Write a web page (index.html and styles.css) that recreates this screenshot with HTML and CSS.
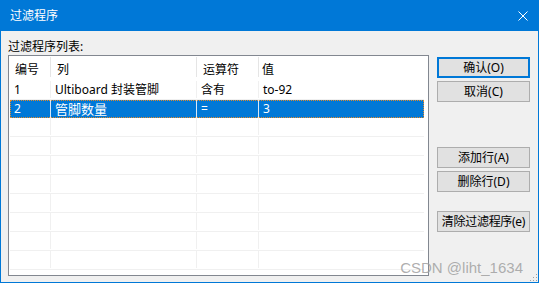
FILE: index.html
```html
<!DOCTYPE html>
<html>
<head>
  <title>过滤程序</title>
  <link rel="stylesheet" href="styles.css">
</head>
<body>
  <div class="window">
    <div class="titlebar">
      <span class="title">过滤程序</span>
      <svg class="close" width="10" height="10" viewBox="0 0 10 10">
        <path d="M0.5 0.5 L9.5 9.5 M9.5 0.5 L0.5 9.5" stroke="#fff" stroke-width="1" fill="none"/>
      </svg>
    </div>

    <div class="content">
      <div class="left">
        <div class="label">过滤程序列表:</div>
        <div class="list">
          <div class="row header">
            <div class="cell c1">编号</div>
            <div class="cell c2">列</div>
            <div class="cell c3">运算符</div>
            <div class="cell c4">值</div>
          </div>
          <div class="row">
            <div class="cell c1">1</div>
            <div class="cell c2">Ultiboard 封装管脚</div>
            <div class="cell c3">含有</div>
            <div class="cell c4">to-92</div>
          </div>
          <div class="row selected">
            <div class="cell c1">2</div>
            <div class="cell c2">管脚数量</div>
            <div class="cell c3">=</div>
            <div class="cell c4">3</div>
          </div>
          <div class="row"><div class="cell c1"></div><div class="cell c2"></div><div class="cell c3"></div><div class="cell c4"></div></div>
          <div class="row"><div class="cell c1"></div><div class="cell c2"></div><div class="cell c3"></div><div class="cell c4"></div></div>
          <div class="row"><div class="cell c1"></div><div class="cell c2"></div><div class="cell c3"></div><div class="cell c4"></div></div>
          <div class="row"><div class="cell c1"></div><div class="cell c2"></div><div class="cell c3"></div><div class="cell c4"></div></div>
          <div class="row"><div class="cell c1"></div><div class="cell c2"></div><div class="cell c3"></div><div class="cell c4"></div></div>
          <div class="row"><div class="cell c1"></div><div class="cell c2"></div><div class="cell c3"></div><div class="cell c4"></div></div>
          <div class="row"><div class="cell c1"></div><div class="cell c2"></div><div class="cell c3"></div><div class="cell c4"></div></div>
          <div class="row"><div class="cell c1"></div><div class="cell c2"></div><div class="cell c3"></div><div class="cell c4"></div></div>
        </div>
      </div>

      <div class="buttons">
        <button class="btn default">确认(O)</button>
        <button class="btn">取消(C)</button>
        <button class="btn add">添加行(A)</button>
        <button class="btn">删除行(D)</button>
        <button class="btn clear">清除过滤程序(e)</button>
      </div>
    </div>

    <div class="watermark">CSDN @liht_1634</div>
    <svg class="grip" width="10" height="10" viewBox="0 0 10 10">
      <rect x="8" y="2" width="1" height="1" fill="#a0a0a0"/>
      <rect x="5" y="5" width="1" height="1" fill="#a0a0a0"/>
      <rect x="8" y="5" width="1" height="1" fill="#a0a0a0"/>
      <rect x="2" y="8" width="1" height="1" fill="#a0a0a0"/>
      <rect x="5" y="8" width="1" height="1" fill="#a0a0a0"/>
      <rect x="8" y="8" width="1" height="1" fill="#a0a0a0"/>
    </svg>
  </div>
</body>
</html>
```

FILE: styles.css
```css
body {
  margin: 0;
  font-family: "Noto Sans", "Noto Sans CJK SC", sans-serif;
  font-size: 12px;
  color: #000;
}

.window {
  position: relative;
  width: 539px;
  height: 283px;
  box-sizing: border-box;
  border: 1px solid #0078d7;
  border-top: none;
  background-color: #f0f0f0;
  overflow: hidden;
}

.titlebar {
  height: 31px;
  margin: 0 -1px;
  background-color: #0078d7;
  color: #fff;
  display: flex;
  align-items: center;
  justify-content: space-between;
  padding: 0 11px 0 10px;
}

.title {
  line-height: 16px;
}

.close {
  display: block;
}

.content {
  display: flex;
  padding-left: 7px;
}

.left {
  width: 421px;
}

.label {
  height: 24px;
  padding-top: 8px;
  line-height: 16px;
  box-sizing: border-box;
}

.list {
  height: 221px;
  box-sizing: border-box;
  border: 1px solid #828790;
  background-color: #fff;
  overflow: hidden;
}

.row {
  display: flex;
  height: 18px;
  margin-left: 1px;
  width: 414px;
  border-bottom: 1px solid #f0f0f0;
  line-height: 17px;
}

.cell {
  box-sizing: border-box;
  height: 17px;
  padding-left: 4px;
  border-right: 1px solid #f0f0f0;
  white-space: nowrap;
  overflow: hidden;
}

.c1 { width: 41px; }
.c2 { width: 146px; }
.c3 { width: 62px; }
.c4 { width: 165px; border-right: none; }

.row.header {
  height: 25px;
  width: 417px;
  margin-left: 0;
  border-bottom: none;
  line-height: 26px;
}

.header .cell {
  height: 20px;
  margin-top: 1px;
  padding-left: 6px;
  border-right-color: #e5e5e5;
}

.header .c1 { width: 42px; }
.header .c4 { padding-left: 3px; }

.row.selected {
  height: 18px;
  border-bottom: none;
  background-color: #0078d7;
  color: #fff;
  outline: 1px dotted #e28a2a;
  outline-offset: -1px;
  line-height: 18px;
}

.selected .cell {
  height: 18px;
  border-right-color: #d8e8f8;
}

.selected .c2 {
  font-size: 13px;
}

.buttons {
  display: flex;
  flex-direction: column;
  margin-left: 8px;
  padding-top: 26px;
}

.btn {
  width: 93px;
  height: 21px;
  margin: 0 0 3px 0;
  padding: 0;
  box-sizing: border-box;
  border: 1px solid #adadad;
  background-color: #e1e1e1;
  font-family: "Noto Sans", "Noto Sans CJK SC", sans-serif;
  font-size: 12px;
  line-height: 18px;
  color: #000;
}

.btn.default {
  border: 2px solid #0078d7;
  line-height: 16px;
}

.btn.add {
  margin-top: 42px;
}

.btn.clear {
  margin-top: 16px;
  letter-spacing: -0.3px;
}

.watermark {
  position: absolute;
  right: 15px;
  bottom: 6px;
  font-family: "Liberation Sans", sans-serif;
  font-size: 15px;
  color: rgba(160, 160, 160, 0.85);
}

.grip {
  position: absolute;
  right: 0;
  bottom: 0;
}
```
